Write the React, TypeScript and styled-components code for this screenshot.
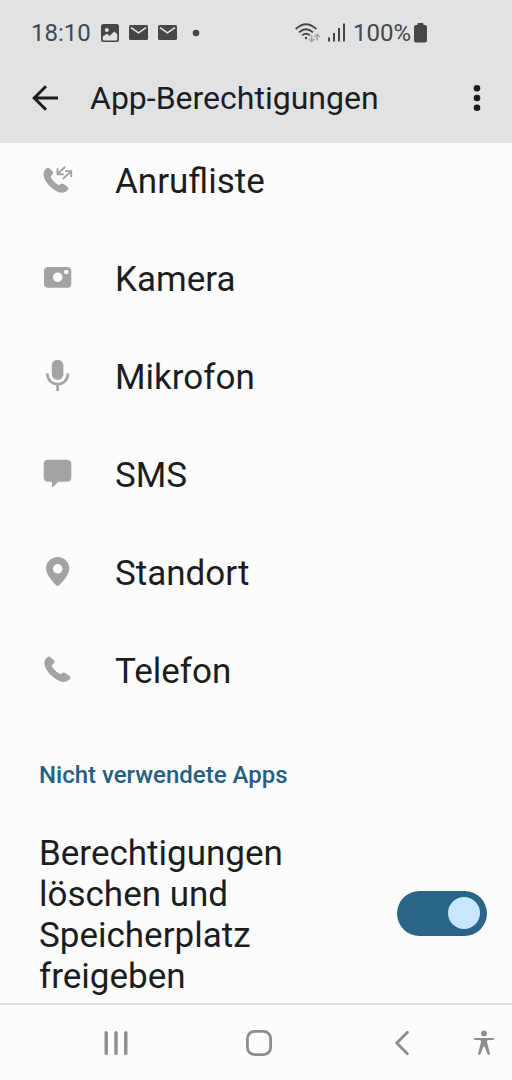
import React from "react";
import styled, { createGlobalStyle } from "styled-components";

const GlobalStyle = createGlobalStyle`
  *, *::before, *::after { box-sizing: border-box; }
  body {
    margin: 0;
    background: #fcfcfc;
    color: #1b1c1e;
    font-family: Roboto, "Liberation Sans", sans-serif;
  }
  button { font: inherit; color: inherit; background: none; border: 0; padding: 0; cursor: pointer; }
  svg { display: block; flex: none; }
`;

const Screen = styled.div`
  display: flex;
  flex-direction: column;
  min-height: 100vh;
`;

const Header = styled.header`
  background: #e1e2e4;
  padding-bottom: 12px;
`;

const StatusBar = styled.div`
  display: flex;
  justify-content: space-between;
  align-items: center;
  height: 65px;
  padding: 0 85px 0 31px;
  color: #444648;
  font-size: 24px;
  line-height: 28px;
`;

const StatusGroup = styled.div<{ $gap: number }>`
  display: flex;
  align-items: center;
  gap: ${(p) => p.$gap}px;
`;

const BatteryLevel = styled.span`
  display: flex;
  align-items: center;
  gap: 3px;
`;

const Toolbar = styled.div`
  display: flex;
  align-items: center;
  height: 66px;
  padding: 0 20px 0 30px;
`;

const IconButton = styled.button`
  display: grid;
  place-items: center;
  width: 30px;
  height: 40px;
`;

const Title = styled.h1`
  flex: 1;
  margin: 0 0 0 30px;
  font-size: 32px;
  line-height: 38px;
  font-weight: 400;
`;

const Main = styled.main`
  flex: 1;
  padding: 17px 25px 6px 39px;
`;

const PermissionList = styled.ul`
  display: flex;
  flex-direction: column;
  gap: 56px;
  margin: 0;
  padding: 0;
  list-style: none;
`;

const Permission = styled.button`
  display: flex;
  align-items: center;
  gap: 41px;
  width: 100%;
  height: 42px;
  padding-left: 3px;
  font-size: 35px;
  line-height: 41px;
  text-align: left;
`;

const PermissionIcon = styled.svg`
  color: #a3a3a3;
`;

const SectionTitle = styled.h2`
  margin: 69px 0 44px;
  color: #255f80;
  font-size: 24px;
  line-height: 28px;
  font-weight: 500;
`;

const Setting = styled.label`
  display: flex;
  align-items: center;
  justify-content: space-between;
  gap: 24px;
  font-size: 35px;
  line-height: 41px;
  cursor: pointer;
`;

const Switch = styled.input`
  appearance: none;
  flex: none;
  display: flex;
  align-items: center;
  width: 90px;
  height: 45px;
  margin: 0 0 4px;
  padding: 0 7px;
  border-radius: 23px;
  background: #a3a3a3;
  cursor: pointer;

  &::before {
    content: "";
    width: 32px;
    height: 32px;
    border-radius: 50%;
    background: #c8e6ff;
  }

  &:checked {
    justify-content: flex-end;
    background: #2a6587;
  }
`;

const NavBar = styled.nav`
  position: sticky;
  bottom: 0;
  display: grid;
  grid-template-columns: 1fr 1fr 1fr 20px;
  height: 77px;
  padding: 0 18px 0 44px;
  border-top: 2px solid #dedede;
  background: #fcfcfc;
  color: #8d8d8d;
`;

const NavButton = styled.button`
  display: grid;
  place-items: center;
`;

const handset =
  "M61 36L72 46Q76 50 72 54L66 61Q65 64 69 69Q80 83 90 87Q93 88 96 85Q101 81 106 84L119 93Q124 97 120 102Q113 111 102 111Q88 111 70 97Q44 76 43 54Q43 44 52 37Q57 33 61 36Z";

const permissions: { name: string; icon: React.ReactNode }[] = [
  {
    name: "Anrufliste",
    icon: (
      <>
        <path d={handset} fill="currentColor" transform="translate(-12.3 -8.8) scale(.32 .33)" />
        <g fill="none" stroke="currentColor" strokeWidth="1.9">
          <path d="M23.2 1.8L15.5 9M15.5 3.2V9.2H21.6" />
          <path d="M20.8 14L28.8 6.4M23 6.1H29.2V12" />
        </g>
      </>
    ),
  },
  {
    name: "Kamera",
    icon: (
      <path
        fill="currentColor"
        fillRule="evenodd"
        d="M6 4H25.3Q29.3 4 29.3 8V20.7Q29.3 24.7 25.3 24.7H6Q2 24.7 2 20.7V8Q2 4 6 4ZM20.5 14.3a4.8 4.8 0 1 0-9.6 0a4.8 4.8 0 1 0 9.6 0ZM26.6 9a2.3 2.3 0 1 0-4.6 0a2.3 2.3 0 1 0 4.6 0Z"
      />
    ),
  },
  {
    name: "Mikrofon",
    icon: (
      <>
        <rect x="9.8" y="-1.3" width="11.6" height="20.3" rx="5.8" fill="currentColor" />
        <path d="M5.3 12.6C5.3 26.6 26 26.6 26 12.6M15.6 23V30" fill="none" stroke="currentColor" strokeWidth="2.6" />
      </>
    ),
  },
  {
    name: "SMS",
    icon: (
      <path
        fill="currentColor"
        d="M6.2 .7H24.8Q29.3 .7 29.3 5.2V18.2Q29.3 22.7 24.8 22.7H16.5L10.8 28Q10 28.6 10 27.5V22.7H6.2Q1.7 22.7 1.7 18.2V5.2Q1.7 .7 6.2 .7Z"
      />
    ),
  },
  {
    name: "Standort",
    icon: (
      <path
        fill="currentColor"
        fillRule="evenodd"
        d="M15.7 0C22.1 0 27.3 5 27.3 11.3C27.3 17 22.5 23.2 17.3 28.2Q15.7 29.7 14.1 28.2C8.9 23.2 4 17 4 11.3C4 5 9.2 0 15.7 0ZM20.5 11.8a4.8 4.8 0 1 0-9.6 0a4.8 4.8 0 1 0 9.6 0Z"
      />
    ),
  },
  {
    name: "Telefon",
    icon: <path d={handset} fill="currentColor" transform="translate(-12 -10) scale(.3333)" />,
  },
];

const PictureIcon = () => (
  <svg width="18" height="18" viewBox="0 0 18 18" aria-hidden="true">
    <path
      fill="currentColor"
      fillRule="evenodd"
      d="M2.5 0H15.5Q18 0 18 2.5V15.5Q18 18 15.5 18H2.5Q0 18 0 15.5V2.5Q0 0 2.5 0ZM1.8 12.6V15.2Q1.8 16.4 3 16.4H15Q16.3 16.4 16.3 15.2V10.3L13.2 7.6L8.7 12L6 9.7ZM7.8 6a2 2 0 1 0-4 0a2 2 0 1 0 4 0Z"
    />
  </svg>
);

const MailIcon = () => (
  <svg width="19" height="15" viewBox="0 0 19 15" aria-hidden="true">
    <rect width="19" height="15" rx="1.6" fill="currentColor" />
    <path d="M2 2.6L9.5 7.8L17 2.6" fill="none" stroke="#e8e9ea" strokeWidth="1.5" />
  </svg>
);

const WifiIcon = () => (
  <svg width="25" height="20" viewBox="0 0 25 20" fill="none" aria-hidden="true">
    <g stroke="currentColor" strokeWidth="1.9">
      <path d="M.7 6Q11 -3.7 21.3 6" />
      <path d="M4 9.4Q11 3 18 9.4" />
      <path d="M7.2 12.4Q11 9 14.8 12.4" />
    </g>
    <circle cx="11" cy="15" r="1.2" fill="currentColor" />
    <g stroke="#a0a2a4" strokeWidth="1.5">
      <path d="M16.6 12V18.5M14 16L16.6 18.7L19.2 16" />
      <path d="M22.2 17.5V11.5M19.6 14L22.2 11.3L24.8 14" />
    </g>
  </svg>
);

const SignalIcon = () => (
  <svg width="17" height="20" viewBox="0 0 17 20" stroke="currentColor" strokeWidth="2" aria-hidden="true">
    <path d="M1 14.5V18.5M6 10V18.5M11 5V18.5M16 .5V18.5" />
  </svg>
);

const BatteryIcon = () => (
  <svg width="13" height="20" viewBox="0 0 13 20" aria-hidden="true">
    <path
      fill="currentColor"
      d="M4.5 0H8.5Q9.5 0 9.5 1V2H11Q13 2 13 4V17.5Q13 19.5 11 19.5H2Q0 19.5 0 17.5V4Q0 2 2 2H3.5V1Q3.5 0 4.5 0Z"
    />
  </svg>
);

export default function App() {
  return (
    <Screen>
      <GlobalStyle />
      <Header>
        <StatusBar>
          <StatusGroup $gap={10}>
            <span>18:10</span>
            <PictureIcon />
            <MailIcon />
            <MailIcon />
            <svg width="18" height="8" viewBox="0 0 18 8" aria-hidden="true">
              <circle cx="9" cy="4" r="3.3" fill="currentColor" />
            </svg>
          </StatusGroup>
          <StatusGroup $gap={8}>
            <WifiIcon />
            <SignalIcon />
            <BatteryLevel>
              100%
              <BatteryIcon />
            </BatteryLevel>
          </StatusGroup>
        </StatusBar>
        <Toolbar>
          <IconButton aria-label="Zurück">
            <svg width="26" height="26" viewBox="0 0 26 26" fill="none" stroke="currentColor" strokeWidth="3">
              <path d="M14 1.2L2.2 13L14 24.8M2 13H26" />
            </svg>
          </IconButton>
          <Title>App-Berechtigungen</Title>
          <IconButton aria-label="Weitere Optionen">
            <svg width="8" height="28" viewBox="0 0 8 28" fill="currentColor">
              <circle cx="4" cy="4.3" r="3.3" />
              <circle cx="4" cy="14" r="3.3" />
              <circle cx="4" cy="23.7" r="3.3" />
            </svg>
          </IconButton>
        </Toolbar>
      </Header>

      <Main>
        <PermissionList>
          {permissions.map(({ name, icon }) => (
            <li key={name}>
              <Permission>
                <PermissionIcon width="32" height="36" viewBox="0 -2 32 36" aria-hidden="true">
                  {icon}
                </PermissionIcon>
                {name}
              </Permission>
            </li>
          ))}
        </PermissionList>

        <SectionTitle>Nicht verwendete Apps</SectionTitle>
        <Setting htmlFor="free-storage">
          <span>Berechtigungen löschen und Speicherplatz freigeben</span>
          <Switch id="free-storage" type="checkbox" role="switch" defaultChecked />
        </Setting>
      </Main>

      <NavBar aria-label="Navigation">
        <NavButton aria-label="Letzte Apps">
          <svg width="24" height="26" viewBox="0 0 24 26" stroke="currentColor" strokeWidth="3.4" strokeLinecap="round">
            <path d="M2.2 2.6V23.4M12 2.6V23.4M21.8 2.6V23.4" />
          </svg>
        </NavButton>
        <NavButton aria-label="Startbildschirm">
          <svg width="26" height="26" viewBox="0 0 26 26" fill="none" stroke="currentColor" strokeWidth="2.8">
            <rect x="1.4" y="1.4" width="23.2" height="23.2" rx="7" />
          </svg>
        </NavButton>
        <NavButton aria-label="Zurück">
          <svg width="14" height="26" viewBox="0 0 14 26" fill="none" stroke="currentColor" strokeWidth="2.8" strokeLinecap="round">
            <path d="M12.4 2.2L1.8 13L12.4 23.8" />
          </svg>
        </NavButton>
        <NavButton aria-label="Bedienungshilfen">
          <svg width="20" height="26" viewBox="0 0 20 26" fill="currentColor">
            <circle cx="10" cy="3.4" r="2.9" />
            <path d="M1 8H19Q20 8 20 9Q20 10 19 10H14Q12.8 10.3 13 12L15.9 23.6Q16 24.8 15 25Q13.8 25.2 13.5 24L10.5 16.6H9.5L6.5 24Q6.2 25.2 5 25Q4 24.8 4.1 23.6L7 12Q7.2 10.3 6 10H1Q0 10 0 9Q0 8 1 8Z" />
          </svg>
        </NavButton>
      </NavBar>
    </Screen>
  );
}
